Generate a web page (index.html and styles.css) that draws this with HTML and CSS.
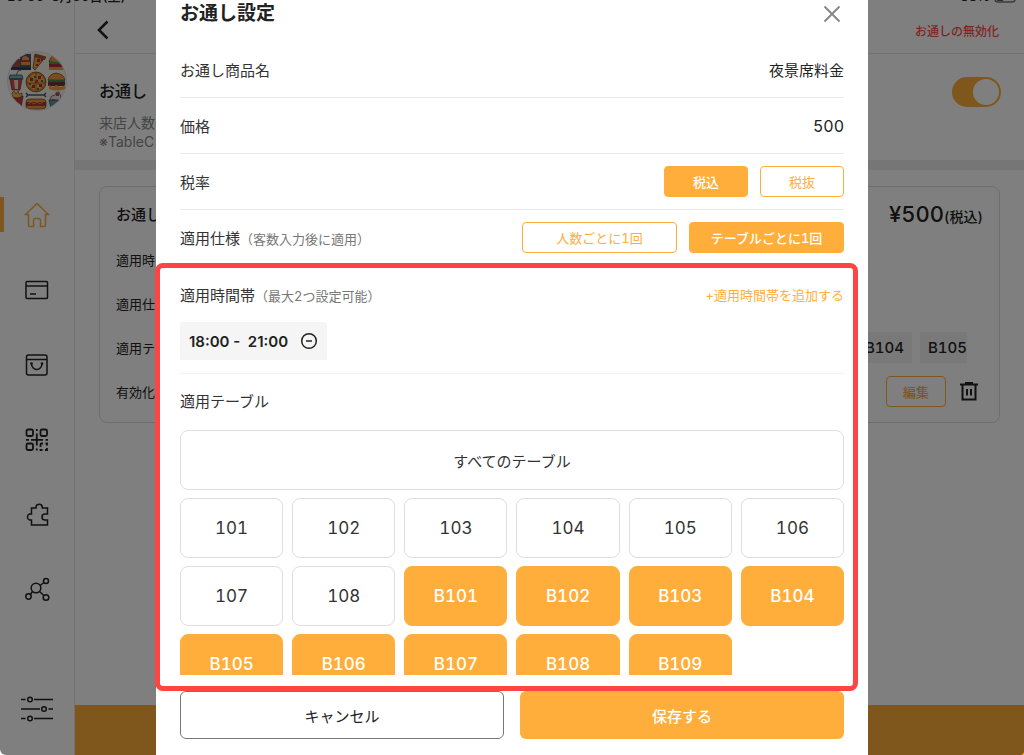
FILE: index.html
```html
<!DOCTYPE html>
<html lang="ja">
<head>
    <meta charset="UTF-8">
    <meta name="viewport" content="width=device-width, initial-scale=1.0">
    <title>お通し設定</title>
    <link rel="stylesheet" href="styles.css">
</head>
<body>
    <div class="app">
        <div class="status-bar">
            <span>16:50&nbsp; 8月30日(土)</span>
            <span class="status-right">
                88%
                <svg width="24" height="12" viewBox="0 0 24 12"><rect x="1" y="1" width="20" height="10" rx="3" fill="none" stroke="#777"/><rect x="3" y="3" width="6" height="6" rx="1" fill="#111"/></svg>
            </span>
        </div>

        <!-- Sidebar -->
        <aside class="sidebar">
            <svg class="avatar" viewBox="0 0 60 60" role="img" aria-label="店舗ロゴ">
                <defs><clipPath id="round"><circle cx="30" cy="30" r="29"/></clipPath></defs>
                <circle cx="30" cy="30" r="29.500" fill="#f3f2e4" stroke="#d5d5d5"/>
                <g clip-path="url(#round)">
                    <!-- drink and tray -->
                    <path d="M5 8h9v11H5z" fill="#a34a4a"/><path d="M13 3h11v16H13z" fill="#46557f"/>
                    <path d="M15 7q3-4 7 0v2h-7z" fill="#ef9a35"/><path d="M14 9h9v2h-9z" fill="#b93f34"/><path d="M14 11h9v3h-9z" fill="#e99a3a"/><path d="M4 16h20v3H4z" fill="#343b66"/>
                    <!-- pizza slice -->
                    <path d="M28 3l11 3-3 3-8 10-2-2z" fill="#e9a53c" stroke="#5c2c28"/><path d="M28 3l11 3-1 3-11-3z" fill="#a95131"/><path d="M30 8h3v3h-3zM29 13h2v2h-2zM34 8h2v2h-2z" fill="#b52f31"/>
                    <!-- burger -->
                    <path d="M42 11q2-8 9-7 6 2 7 8z" fill="#ec9442" stroke="#4a2a31"/><path d="M42 11h16v2H42z" fill="#4a9451"/><path d="M42 13h16v3H42z" fill="#a1323b"/><path d="M42 16h16v3H42z" fill="#e49c43"/>
                    <!-- soda cup -->
                    <path d="M9 25l2-5 3-1" fill="none" stroke="#3a374f"/><path d="M3 24h12l1 4H2z" fill="#68b5b3" stroke="#343853"/><path d="M3 28h12l-2 11H5z" fill="#d84a45" stroke="#343853"/><path d="M7 29h4v9H8z" fill="#f1dac6"/>
                    <!-- pizza -->
                    <circle cx="29" cy="31" r="10" fill="#df8a32" stroke="#5b292b"/><circle cx="29" cy="31" r="8" fill="#e7b245"/><path d="M22 25l14 12M29 22v18M20 32h18M23 38l12-14" stroke="#9d4b30" fill="none"/>
                    <path d="M23 27h3v3h-3zM31 25h3v3h-3zM25 34h3v3h-3zM32 33h3v3h-3zM29 29h2v2h-2z" fill="#b82d34"/><path d="M27 25h2v2h-2zM34 29h2v2h-2zM22 32h2v2h-2zM30 37h2v2h-2z" fill="#387057"/>
                    <!-- large burger -->
                    <path d="M41 29q1-6 8-7 8 1 9 7z" fill="#ee9b3d" stroke="#793a2d"/><path d="M41 29h17v2H41z" fill="#3d8b4a"/><path d="M41 31h17v4H41z" fill="#7e2d37"/><path d="M42 34l4 2 3-2 5 2 4-2v4q-8 3-16 0z" fill="#eaa447"/>
                    <!-- fries -->
                    <path d="M5 42l2-2 2 3 2-3 1 3 3-1v6H5z" fill="#eeb645" stroke="#88422c"/><path d="M4 45q6 4 12 0l-2 12H7z" fill="#c83b3d" stroke="#542c3d"/>
                    <!-- cutlery -->
                    <path d="M21 44h16M19 42l2 2-2 2M39 42l-2 2 2 2" fill="none" stroke="#40577f" stroke-width="1.500"/>
                    <!-- hot dog -->
                    <path d="M19 51q0-3 4-3h12q4 0 4 3v4q0 3-4 3H23q-4 0-4-3z" fill="#e79a3d" stroke="#68352e"/><path d="M19 51h20v4H19z" fill="#af3635"/><path d="M21 53l3-2 3 2 3-2 3 2 3-2" fill="none" stroke="#f1bd4a"/>
                    <!-- sundae -->
                    <path d="M43 48q1-4 5-4 1-4 4-3l2 5-2 6-5 4z" fill="#e9dce0" stroke="#374060"/><path d="M42 49h11l-4 8h-5z" fill="#4a9da7" stroke="#303b57"/><path d="M49 42h3v3h-3zM45 48h3v2h-3z" fill="#c63e50"/>
                </g>
            </svg>
            <nav class="nav">
                <a href="#" class="nav-item active" aria-label="ホーム">
                    <svg width="26" height="26" viewBox="0 0 26 26"><path d="M1.500 12.500L13 1.500l11.500 11h-3v11q0 1-1 1h-4v-6q0-2-2-2h-3q-2 0-2 2v6h-4q-1 0-1-1v-11z"/></svg>
                </a>
                <a href="#" class="nav-item" aria-label="会計">
                    <svg width="26" height="26" viewBox="0 0 26 26"><rect x="2" y="4.500" width="21.500" height="17" rx="1"/><path d="M2 9h21.500M6 17h6"/></svg>
                </a>
                <a href="#" class="nav-item" aria-label="注文">
                    <svg width="26" height="26" viewBox="0 0 26 26"><rect x="2.500" y="3" width="20.500" height="20" rx="2"/><path d="M2.500 7.500H23M7.500 11.500a5.200 6 0 0 0 10.500 0"/><circle cx="7.500" cy="11.500" r=".6"/><circle cx="18" cy="11.500" r=".6"/></svg>
                </a>
                <a href="#" class="nav-item qr" aria-label="QRコード">
                    <svg width="26" height="26" viewBox="0 0 26 26"><rect x="2.500" y="2.500" width="6.500" height="6.500" rx="1.500"/><rect x="16.500" y="2.500" width="6.500" height="6.500" rx="1.500"/><rect x="2.500" y="16.500" width="6.500" height="6.500" rx="1.500"/><path d="M12.800 2v2M12.800 6.500v12M2 12.800h3M7 12.800h12M21.500 12.800h2.500M12.800 21.500v2M16.500 20v-2.500q0-1 1-1H19M21.500 16.500H23v2M23 21v2h-2M18.500 23h-2v-1"/></svg>
                </a>
                <a href="#" class="nav-item" aria-label="拡張機能">
                    <svg width="26" height="26" viewBox="0 0 26 26"><path d="M7.500 6h4.500V5a3.200 3.200 0 0 1 6.300 0v1H23.500v6H21a3 3 0 0 0 0 6h2.500v5h-16v-5H5.500a3.200 3.200 0 0 1 0-6h2z"/></svg>
                </a>
                <a href="#" class="nav-item" aria-label="連携">
                    <svg width="26" height="26" viewBox="0 0 26 26"><circle cx="12" cy="11" r="4.800"/><circle cx="22" cy="4" r="2.500"/><circle cx="4.500" cy="19.500" r="2.700"/><circle cx="22" cy="20.500" r="2.800"/><path d="M16 8.500l4-3M8.500 14.500l-2 2.700M15.500 14.500l4.300 4"/></svg>
                </a>
            </nav>
            <a href="#" class="nav-settings" aria-label="設定">
                <svg width="34" height="26" viewBox="0 0 34 26"><path d="M1 3.500h4.500M14 3.500h19M1 13h19M28.500 13H33M1 22.500h4.500M14 22.500h19"/><circle cx="10" cy="3.500" r="2.300"/><circle cx="24" cy="13" r="2.300"/><circle cx="10" cy="22.500" r="2.300"/></svg>
            </a>
        </aside>

        <!-- Page behind the dialog -->
        <main class="main">
            <header class="main-header">
                <button class="back" aria-label="戻る"><svg width="14" height="22" viewBox="0 0 14 22"><path d="M11.500 2.500L3 11l8.500 8.500"/></svg></button>
                <button class="disable">お通しの無効化</button>
            </header>
            <section class="intro">
                <div>
                    <label class="intro-title" for="otoshi">お通し</label>
                    <p class="intro-text">来店人数<br>※TableC</p>
                </div>
                <input type="checkbox" id="otoshi" class="toggle" checked>
            </section>
            <div class="card">
                <div class="card-head">
                    <span>お通し</span>
                    <span class="card-price">¥500<small>(税込)</small></span>
                </div>
                <div class="card-row">適用時</div>
                <div class="card-row">適用仕</div>
                <div class="card-row">
                    適用テ
                    <div class="chips"><span class="chip">B104</span><span class="chip">B105</span></div>
                </div>
                <div class="card-row">
                    有効化
                    <div class="card-actions">
                        <button class="edit">編集</button>
                        <button class="delete" aria-label="削除"><svg width="20" height="20" viewBox="0 0 20 20"><path d="M1 3.500h18M6 2h8M3.500 4v14.500h13V4M8 8v6.500M12 8v6.500"/></svg></button>
                    </div>
                </div>
            </div>
            <div class="main-footer"></div>
        </main>
    </div>

    <!-- Settings dialog -->
    <div class="overlay">
        <div class="modal" role="dialog" aria-labelledby="modalTitle">
            <div class="modal-header">
                <h2 id="modalTitle">お通し設定</h2>
                <button class="close" aria-label="閉じる"><svg width="18" height="18" viewBox="0 0 18 18"><path d="M1.500 1.500l15 15M16.500 1.500l-15 15"/></svg></button>
            </div>
            <div class="modal-body">
                <div class="row">
                    <label for="itemName">お通し商品名</label>
                    <input type="text" id="itemName" class="value" value="夜景席料金">
                </div>
                <div class="row">
                    <label for="price">価格</label>
                    <input type="text" id="price" class="value price" value="500">
                </div>
                <div class="row">
                    <span>税率</span>
                    <div class="options">
                        <button class="option selected">税込</button>
                        <button class="option">税抜</button>
                    </div>
                </div>
                <div class="row">
                    <span>適用仕様<small>（客数入力後に適用）</small></span>
                    <div class="options">
                        <button class="option wide">人数ごとに1回</button>
                        <button class="option wide selected">テーブルごとに1回</button>
                    </div>
                </div>
                <div class="row row-plain">
                    <span>適用時間帯<small>（最大2つ設定可能）</small></span>
                    <button class="add-time">+適用時間帯を追加する</button>
                </div>
                <div class="times">
                    <div class="time">
                        <span>18:00 -&nbsp; 21:00</span>
                        <button class="remove" aria-label="時間帯を削除"><svg width="18" height="18" viewBox="0 0 18 18"><circle cx="9" cy="9" r="7.300"/><path d="M6 9h6"/></svg></button>
                    </div>
                </div>
                <div class="tables-title">適用テーブル</div>
                <div class="tables">
                    <button class="table all">すべてのテーブル</button>
                    <button class="table">101</button>
                    <button class="table">102</button>
                    <button class="table">103</button>
                    <button class="table">104</button>
                    <button class="table">105</button>
                    <button class="table">106</button>
                    <button class="table">107</button>
                    <button class="table">108</button>
                    <button class="table selected">B101</button>
                    <button class="table selected">B102</button>
                    <button class="table selected">B103</button>
                    <button class="table selected">B104</button>
                    <button class="table selected">B105</button>
                    <button class="table selected">B106</button>
                    <button class="table selected">B107</button>
                    <button class="table selected">B108</button>
                    <button class="table selected">B109</button>
                </div>
            </div>
            <div class="modal-footer">
                <button class="cancel">キャンセル</button>
                <button class="save">保存する</button>
            </div>
            <div class="highlight"></div>
        </div>
    </div>
</body>
</html>
```
FILE: styles.css
```css
* {
    box-sizing: border-box;
    margin: 0;
    padding: 0;
}

body, button, input {
    font-family: Inter, "Noto Sans CJK JP", sans-serif;
    font-variant-numeric: tabular-nums;
}

body {
    background-color: #fff;
    color: #222;
    height: 100vh;
    overflow: hidden;
}

button {
    background: none;
    border: none;
    color: inherit;
    cursor: pointer;
}

a {
    color: inherit;
}

svg {
    display: block;
    fill: none;
    stroke: currentColor;
    stroke-width: 1.5px;
    flex: none;
}

.app {
    display: flex;
    height: 100vh;
    position: relative;
}

.status-bar {
    position: absolute;
    top: -13px;
    left: 7px;
    right: 6px;
    display: flex;
    justify-content: space-between;
    font-size: 13px;
    font-weight: 500;
    line-height: 18px;
}

.status-right {
    display: flex;
    align-items: flex-end;
    gap: 4px;
}

.status-right svg {
    margin-bottom: 2px;
}

/* Sidebar */
.sidebar {
    width: 75px;
    flex: none;
    display: flex;
    flex-direction: column;
    align-items: center;
    padding-top: 51px;
    padding-bottom: 33px;
    border-right: 1px solid #e5e5e5;
}

.avatar {
    width: 60px;
    height: 60px;
    stroke: none;
    stroke-width: 0.7px;
    margin-bottom: 66px;
}

.nav {
    width: 100%;
    flex: 1;
}

.nav-item {
    display: flex;
    align-items: center;
    justify-content: center;
    height: 75px;
    position: relative;
}

.nav-item.active {
    color: #ffae3b;
}

.nav-item.active::before {
    content: "";
    position: absolute;
    left: 0;
    top: 20px;
    width: 4px;
    height: 35px;
    background-color: #ffae3b;
}

.nav-item.qr svg {
    stroke-width: 1.8px;
}

/* Page */
.main {
    flex: 1;
    display: flex;
    flex-direction: column;
}

.main-header {
    display: flex;
    align-items: center;
    justify-content: space-between;
    height: 54px;
    padding: 7px 25px 0 21px;
    border-bottom: 1px solid #e5e5e5;
}

.back svg {
    stroke-width: 2.5px;
}

.disable {
    color: #ff4a40;
    font-size: 12px;
    font-weight: 500;
}

.intro {
    display: flex;
    justify-content: space-between;
    padding: 23px 23px 9px 24px;
    border-bottom: 10px solid #ececec;
}

.intro-title {
    display: block;
    font-size: 16px;
    font-weight: 500;
    line-height: 28px;
    margin-bottom: 8px;
}

.intro-text {
    color: #888;
    font-size: 14px;
    line-height: 19px;
}

.toggle {
    appearance: none;
    width: 49px;
    height: 30px;
    border-radius: 15px;
    background-color: #ffae3b;
    display: flex;
    justify-content: flex-end;
    padding: 2px;
}

.toggle::before {
    content: "";
    width: 26px;
    height: 26px;
    border-radius: 50%;
    background-color: #fff;
}

.card {
    margin: 16px 24px 0;
    padding: 3px 16px 9px;
    border: 1px solid #dcdcdc;
    border-radius: 8px;
}

.card-head {
    display: flex;
    align-items: center;
    justify-content: space-between;
    height: 47px;
    font-size: 15px;
    font-weight: 500;
}

.card-price {
    font-size: 22px;
}

.card-price small {
    font-size: 14px;
}

.card-row {
    display: flex;
    align-items: center;
    justify-content: space-between;
    height: 44px;
    font-size: 13px;
}

.chips {
    display: flex;
    gap: 8px;
    margin-right: 16px;
}

.chip {
    background-color: #f2f2f2;
    padding: 0 8px;
    font-size: 15px;
    font-weight: 500;
    line-height: 31px;
}

.chip:last-child {
    padding-right: 0;
}

.card-actions {
    display: flex;
    align-items: center;
    gap: 13px;
    margin-right: 4px;
}

.edit {
    width: 60px;
    height: 31px;
    border: 1px solid #ffae3b;
    border-radius: 4px;
    color: #ffae3b;
    font-size: 13px;
    font-weight: 500;
}

.delete svg {
    stroke-width: 2px;
}

.main-footer {
    height: 50px;
    margin-top: auto;
    background-color: #ffae3b;
}

/* Dialog */
.overlay {
    position: fixed;
    inset: 0;
    display: flex;
    justify-content: center;
    background-color: rgba(0, 0, 0, 0.5);
    border-radius: 0 0 4px 6px;
}

.modal {
    display: flex;
    flex-direction: column;
    width: 100%;
    max-width: 712px;
    padding: 0 24px 16px;
    background-color: #fff;
    position: relative;
}

.modal-header {
    display: flex;
    align-items: center;
    justify-content: space-between;
    height: 42px;
    padding-right: 3px;
    padding-bottom: 14px;
}

.modal-header h2 {
    font-size: 19px;
    font-weight: 700;
    line-height: 26px;
}

.close {
    color: #888;
}

.close svg {
    stroke-width: 2px;
}

.modal-body {
    flex: 1;
    min-height: 0;
    overflow: hidden;
    color: #333;
    font-size: 15px;
}

.row {
    display: flex;
    align-items: center;
    justify-content: space-between;
    height: 56px;
    border-bottom: 1px solid #ebebeb;
}

.row-plain {
    border-bottom: none;
}

.row small {
    color: #777;
    font-size: 13px;
}

.value {
    border: none;
    outline: none;
    background: none;
    color: #222;
    font-size: 15px;
    text-align: right;
}

.price {
    font-size: 16px;
}

.options {
    display: flex;
    gap: 12px;
}

.option {
    width: 84px;
    height: 31px;
    border: 1px solid #ffae3b;
    border-radius: 4px;
    color: #ffae3b;
    font-size: 13px;
}

.option.wide {
    width: 155px;
}

.option.selected, .table.selected {
    background-color: #ffae3b;
    border-color: #ffae3b;
    color: #fff;
    font-weight: 500;
}

.add-time {
    color: #ffae3b;
    font-size: 13px;
}

.times {
    padding-bottom: 13px;
    border-bottom: 1px solid #f3f3f3;
}

.time {
    display: inline-flex;
    align-items: center;
    gap: 12px;
    height: 38px;
    padding: 0 9px;
    background-color: #f5f5f5;
    border-radius: 2px;
    color: #222;
    font-variant-numeric: normal;
    font-weight: 600;
    vertical-align: top;
}

.tables-title {
    line-height: 56px;
}

.tables {
    display: grid;
    grid-template-columns: repeat(6, 1fr);
    gap: 8px 9px;
}

.table {
    height: 60px;
    border: 1px solid #dedede;
    border-radius: 8px;
    font-size: 17px;
}

.table.all {
    grid-column: 1 / -1;
    font-size: 15px;
}

.modal-footer {
    display: grid;
    grid-template-columns: 1fr 1fr;
    gap: 16px;
    padding-top: 16px;
}

.cancel, .save {
    height: 48px;
    border-radius: 6px;
    font-size: 15px;
}

.cancel {
    border: 1px solid #777;
}

.save {
    background-color: #ffae3b;
    color: #fff;
    font-weight: 500;
}

/* Frame over the time and table settings */
.highlight {
    position: absolute;
    top: 263px;
    left: -1px;
    right: 10px;
    bottom: 64px;
    border: 5px solid #ff4444;
    border-radius: 8px;
    pointer-events: none;
}
```
